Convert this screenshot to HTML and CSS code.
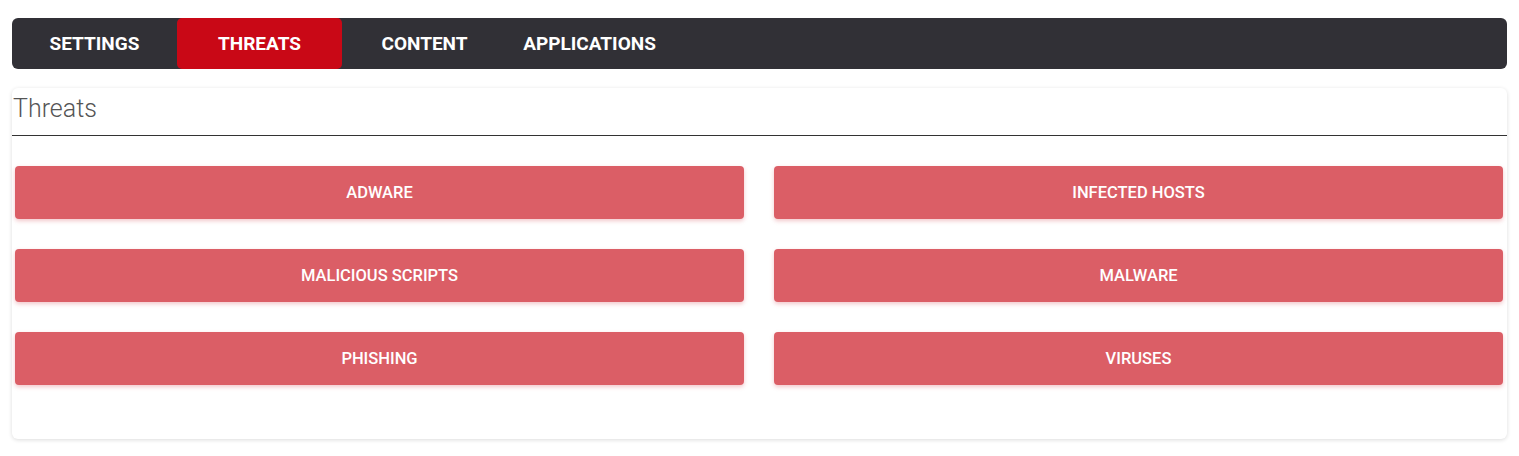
FILE: index.html
```html
<!DOCTYPE html>
<html lang="en">
<head>
    <meta charset="UTF-8">
    <meta name="viewport" content="width=device-width, initial-scale=1.0">
    <title>Threats</title>
    <link rel="stylesheet" href="styles.css">
</head>
<body>
    <div class="page">
        <nav class="tabs">
            <a class="tab" href="#">SETTINGS</a>
            <a class="tab active" href="#">THREATS</a>
            <a class="tab" href="#">CONTENT</a>
            <a class="tab" href="#">APPLICATIONS</a>
        </nav>

        <div class="card">
            <h2 class="card-title">Threats</h2>
            <div class="threat-grid">
                <button type="button" class="threat-btn">ADWARE</button>
                <button type="button" class="threat-btn">INFECTED HOSTS</button>
                <button type="button" class="threat-btn">MALICIOUS SCRIPTS</button>
                <button type="button" class="threat-btn">MALWARE</button>
                <button type="button" class="threat-btn">PHISHING</button>
                <button type="button" class="threat-btn">VIRUSES</button>
            </div>
        </div>
    </div>
</body>
</html>
```

FILE: styles.css
```css
body {
    margin: 0;
    padding: 0;
    background-color: #fff;
    font-family: Roboto, "Liberation Sans", Arial, sans-serif;
}
.page {
    padding: 18px 12px;
}
.tabs {
    display: flex;
    height: 51px;
    background-color: #313036;
    border-radius: 6px;
}
.tab {
    display: flex;
    align-items: center;
    justify-content: center;
    width: 165px;
    color: #fff;
    font-size: 19px;
    font-weight: 700;
    text-decoration: none;
    border-radius: 5px;
}
.tab.active {
    background-color: #c90816;
}
.card {
    margin-top: 19px;
    padding: 0 0 54px;
    background-color: #fff;
    border-radius: 6px;
    box-shadow: 0 1px 4px rgba(0, 0, 0, 0.14);
}
.card-title {
    margin: 0;
    padding: 4px 0 10px 1px;
    font-size: 25px;
    font-weight: 300;
    line-height: 33px;
    color: #555;
    border-bottom: 1px solid #333;
}
.threat-grid {
    display: grid;
    grid-template-columns: 1fr 1fr;
    column-gap: 30px;
    row-gap: 30px;
    padding: 30px 4px 0 3px;
}
.threat-btn {
    height: 53px;
    border: none;
    border-radius: 4px;
    background-color: #db5e66;
    color: #fff;
    font-family: Roboto, "Liberation Sans", Arial, sans-serif;
    font-size: 16.5px;
    font-weight: 500;
    cursor: pointer;
    box-shadow: 0 2px 4px rgba(219, 94, 102, 0.35);
}
.threat-btn:hover {
    background-color: #d44d56;
}
```
